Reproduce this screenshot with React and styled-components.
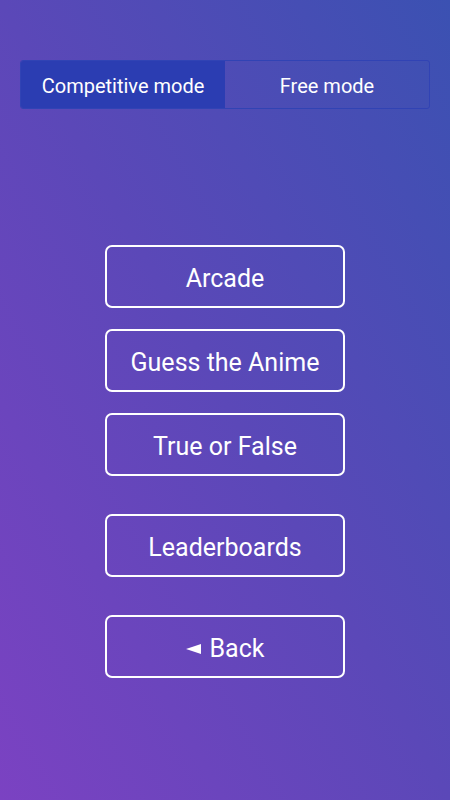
import React, { useState } from "react";
import styled, { createGlobalStyle } from "styled-components";

const GlobalStyle = createGlobalStyle`
  html, body {
    margin: 0;
    padding: 0;
  }
  body {
    font-family: Roboto, "Noto Sans", sans-serif;
  }
`;

const Screen = styled.div`
  width: 450px;
  height: 800px;
  box-sizing: border-box;
  padding-top: 60px;
  display: flex;
  flex-direction: column;
  align-items: center;
  background: linear-gradient(to top right, #7b42c2 0%, #5b48b8 50%, #3b51b2 100%);
  overflow: hidden;
`;

const ModeSwitch = styled.div`
  width: 410px;
  height: 49px;
  box-sizing: border-box;
  display: flex;
  border: 1px solid #3143b4;
  border-radius: 3px;
  overflow: hidden;
`;

const ModeTab = styled.button`
  flex: 1;
  border: none;
  margin: 0;
  padding: 2px 0 0 0;
  font-family: Roboto, sans-serif;
  font-size: 20px;
  color: #fff;
  cursor: pointer;
  background: ${props => (props.active ? "#2b3db2" : "transparent")};
`;

const Menu = styled.div`
  margin-top: 136px;
  display: flex;
  flex-direction: column;
  align-items: center;
`;

const MenuButton = styled.button`
  width: 240px;
  height: 63px;
  box-sizing: border-box;
  margin-top: ${props => props.gap}px;
  border: 2px solid #fff;
  border-radius: 7px;
  background: transparent;
  color: #fff;
  font-family: Roboto, sans-serif;
  font-size: 25px;
  cursor: pointer;
  display: flex;
  align-items: center;
  justify-content: center;
  padding: 3px 0 0 0;
`;

const Arrow = styled.svg`
  width: 15px;
  height: 10px;
  margin-right: 9px;
  margin-top: 1px;
  fill: #fff;
`;

const items = [
  { label: "Arcade", gap: 0 },
  { label: "Guess the Anime", gap: 21 },
  { label: "True or False", gap: 21 },
  { label: "Leaderboards", gap: 38 }
];

export default function App() {
  const [mode, setMode] = useState("competitive");
  return (
    <>
      <GlobalStyle />
      <Screen>
        <ModeSwitch>
          <ModeTab active={mode === "competitive"} onClick={() => setMode("competitive")}>
            Competitive mode
          </ModeTab>
          <ModeTab active={mode === "free"} onClick={() => setMode("free")}>
            Free mode
          </ModeTab>
        </ModeSwitch>
        <Menu>
          {items.map(item => (
            <MenuButton key={item.label} gap={item.gap}>
              {item.label}
            </MenuButton>
          ))}
          <MenuButton gap={38}>
            <Arrow viewBox="0 0 15 10">
              <polygon points="0,5 15,0 15,10" />
            </Arrow>
            Back
          </MenuButton>
        </Menu>
      </Screen>
    </>
  );
}
